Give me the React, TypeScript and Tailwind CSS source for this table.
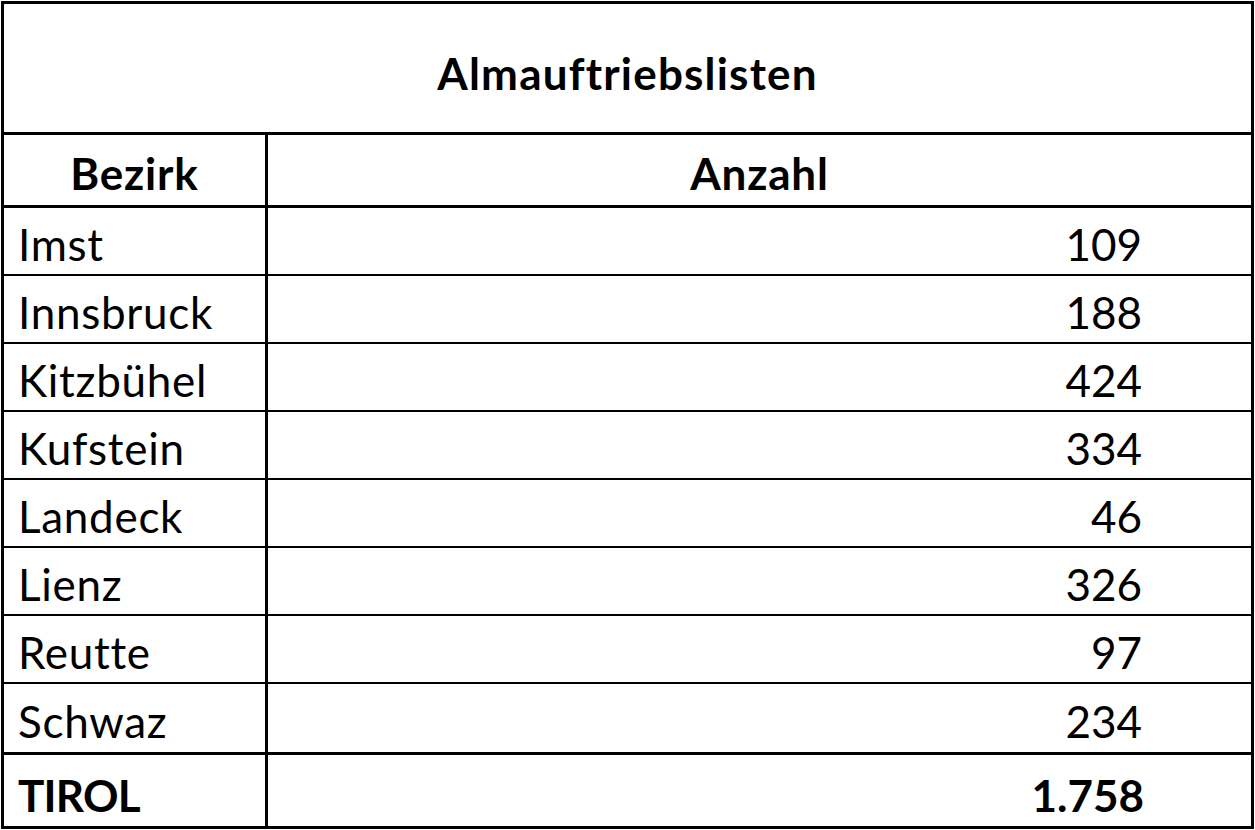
const rows: [string, string][] = [
  ["Imst", "109"],
  ["Innsbruck", "188"],
  ["Kitzbühel", "424"],
  ["Kufstein", "334"],
  ["Landeck", "46"],
  ["Lienz", "326"],
  ["Reutte", "97"],
  ["Schwaz", "234"],
];

export default function App() {
  return (
    <div className="min-h-screen bg-white pt-[1px] pl-[1px] font-['Lato','Open_Sans',sans-serif] text-black [font-variant-ligatures:none]">
      <div className="w-[1253px] border-[3px] border-black">
        {/* title */}
        <div className="flex h-[131px] items-center justify-center border-b-[3px] border-black pt-[10px] text-[44px] font-bold tracking-[1.2px]">
          Almauftriebslisten
        </div>

        {/* header */}
        <div className="flex h-[73px] border-b-[3px] border-black text-[44px] font-bold tracking-[0.8px]">
          <div className="flex w-[264px] items-center justify-center border-r-[3px] border-black pt-[6px]">
            Bezirk
          </div>
          <div className="flex flex-1 items-center justify-center pt-[6px]">Anzahl</div>
        </div>

        {/* data rows */}
        {rows.map(([name, count], i) => (
          <div
            key={name}
            className={
              "flex h-[68px] text-[44px] " +
              (i < rows.length - 1 ? "border-b-2 border-black" : "")
            }
          >
            <div className="flex w-[264px] items-center border-r-[3px] border-black pl-[14px] pt-[6px] tracking-[0.7px]">
              {name}
            </div>
            <div className="flex flex-1 items-center justify-end pr-[109px] pt-[6px]">{count}</div>
          </div>
        ))}

        {/* total */}
        <div className="flex h-[74px] border-t-[3px] border-black text-[44px] font-bold">
          <div className="flex w-[264px] items-center border-r-[3px] border-black pl-[14px] pt-[8px] tracking-[-0.8px]">
            TIROL
          </div>
          <div className="flex flex-1 items-center justify-end pr-[107px] pt-[8px]">1.758</div>
        </div>
      </div>
    </div>
  );
}
